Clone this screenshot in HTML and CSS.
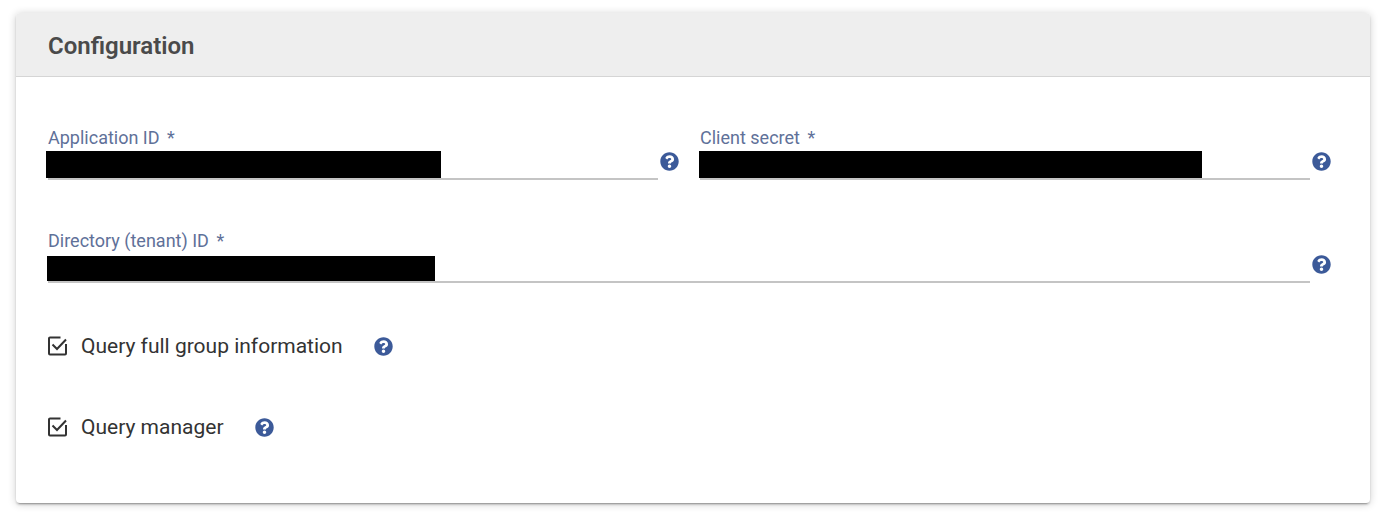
FILE: index.html
```html
<!DOCTYPE html>
<html lang="en">
<head>
  <meta charset="UTF-8">
  <meta name="viewport" content="width=device-width, initial-scale=1.0">
  <title>Configuration</title>
  <link rel="stylesheet" href="styles.css">
</head>
<body>
  <!-- Shared icons -->
  <svg class="sprite" aria-hidden="true">
    <symbol id="icon-help" viewBox="0 0 512 512">
      <path d="M504 256c0 136.997-111.043 248-248 248S8 392.997 8 256C8 119.083 119.043 8 256 8s248 111.083 248 248zM262.655 90c-54.497 0-89.255 22.957-116.549 63.758-3.536 5.286-2.353 12.415 2.715 16.258l34.699 26.31c5.205 3.947 12.621 3.008 16.665-2.122 17.864-22.658 30.113-35.797 57.303-35.797 20.429 0 45.698 13.148 45.698 32.958 0 14.976-12.363 22.667-32.534 33.976C247.128 238.528 216 254.941 216 296v4c0 6.627 5.373 12 12 12h56c6.627 0 12-5.373 12-12v-1.333c0-28.462 83.186-29.647 83.186-106.667 0-58.002-60.165-102-116.531-102zM256 338c-25.365 0-46 20.635-46 46 0 25.364 20.635 46 46 46s46-20.636 46-46c0-25.364-20.635-46-46-46z"/>
    </symbol>
    <symbol id="icon-check" viewBox="0 0 19 20">
      <path d="M12.500 1.500H2a1 1 0 0 0-1 1v15a1 1 0 0 0 1 1h15a1 1 0 0 0 1-1V8M4.500 8.500l4.500 4.500L18 3.500"/>
    </symbol>
  </svg>

  <section class="card">
    <header class="card-header">
      <h1>Configuration</h1>
    </header>

    <form class="card-body">
      <div class="fields">
        <div class="field">
          <div class="field-main">
            <label for="applicationId">Application ID <span class="required">*</span></label>
            <div class="field-input">
              <input type="text" id="applicationId" required>
              <span class="redacted redacted-app"></span>
            </div>
          </div>
          <button type="button" class="help" aria-label="Help for Application ID"><svg><use href="#icon-help"/></svg></button>
        </div>

        <div class="field">
          <div class="field-main">
            <label for="clientSecret">Client secret <span class="required">*</span></label>
            <div class="field-input">
              <input type="text" id="clientSecret" required>
              <span class="redacted redacted-secret"></span>
            </div>
          </div>
          <button type="button" class="help" aria-label="Help for Client secret"><svg><use href="#icon-help"/></svg></button>
        </div>

        <div class="field field-wide">
          <div class="field-main">
            <label for="directoryId">Directory (tenant) ID <span class="required">*</span></label>
            <div class="field-input">
              <input type="text" id="directoryId" required>
              <span class="redacted redacted-directory"></span>
            </div>
          </div>
          <button type="button" class="help" aria-label="Help for Directory ID"><svg><use href="#icon-help"/></svg></button>
        </div>
      </div>

      <div class="options">
        <div class="option">
          <label>
            <span class="checkbox">
              <input type="checkbox" checked>
              <svg><use href="#icon-check"/></svg>
            </span>
            Query full group information
          </label>
          <button type="button" class="help" aria-label="Help for group information"><svg><use href="#icon-help"/></svg></button>
        </div>

        <div class="option">
          <label>
            <span class="checkbox">
              <input type="checkbox" checked>
              <svg><use href="#icon-check"/></svg>
            </span>
            Query manager
          </label>
          <button type="button" class="help" aria-label="Help for manager"><svg><use href="#icon-help"/></svg></button>
        </div>
      </div>
    </form>
  </section>
</body>
</html>
```
FILE: styles.css
```css
* {
  box-sizing: border-box;
}

body {
  margin: 0;
  padding: 13px 17px 16px 16px;
  background: #fff;
  color: #333;
  font-family: Roboto, Arial, sans-serif;
}

.sprite {
  display: none;
}

/* Card */
.card {
  border-radius: 4px;
  background: #fff;
  box-shadow: 0 3px 1px -2px rgba(0, 0, 0, 0.2),
              0 2px 2px 0 rgba(0, 0, 0, 0.14),
              0 1px 8px 0 rgba(0, 0, 0, 0.2);
}

.card-header {
  padding: 19px 32px 16px;
  border-bottom: 1px solid #d5d5d5;
  border-radius: 4px 4px 0 0;
  background: #eee;
}

h1 {
  margin: 0;
  color: #4a4a4a;
  font-size: 24px;
  font-weight: 600;
  line-height: 28px;
}

.card-body {
  padding: 50px 39px 64px 32px;
}

/* Text fields */
.fields {
  display: grid;
  grid-template-columns: 1fr 1fr;
  gap: 50px 21px;
}

.field {
  display: flex;
  align-items: flex-end;
  gap: 2px;
}

.field-wide {
  grid-column: 1 / -1;
}

.field-main {
  flex: 1;
}

.field label {
  display: block;
  margin-bottom: 1px;
  color: #5f7199;
  font-size: 18px;
  line-height: 22px;
}

.required {
  margin-left: 3px;
}

.field-input {
  position: relative;
}

.field-input input {
  display: block;
  width: 100%;
  height: 30px;
  padding: 0;
  border: 0;
  border-bottom: 2px solid #c4c4c4;
  outline: none;
  background: transparent;
  font: inherit;
  font-size: 20px;
}

.redacted {
  position: absolute;
  bottom: 2px;
  left: -1px;
  height: 27px;
  max-width: 100%;
  background: #000;
}

.redacted-app {
  left: -2px;
  width: 395px;
}

.redacted-secret {
  width: 503px;
}

.redacted-directory {
  width: 388px;
  height: 25px;
}

/* Help buttons */
.help {
  display: block;
  padding: 0;
  border: 0;
  background: none;
  cursor: pointer;
}

.help svg {
  display: block;
  width: 19px;
  height: 19px;
  fill: #3c5a99;
}

.field .help {
  margin-bottom: 9px;
}

/* Checkboxes */
.options {
  display: grid;
  gap: 57px;
  margin-top: 51px;
}

.option {
  display: flex;
  align-items: center;
  gap: 31px;
}

.option label {
  display: flex;
  align-items: center;
  gap: 14px;
  font-size: 21px;
  line-height: 24px;
}

.checkbox {
  display: grid;
  width: 19px;
  height: 20px;
}

.checkbox input,
.checkbox svg {
  grid-area: 1 / 1;
  width: 100%;
  height: 100%;
  margin: 0;
}

.checkbox input {
  opacity: 0;
}

.checkbox svg {
  fill: none;
  stroke: #333;
  stroke-width: 2;
  pointer-events: none;
}
```
